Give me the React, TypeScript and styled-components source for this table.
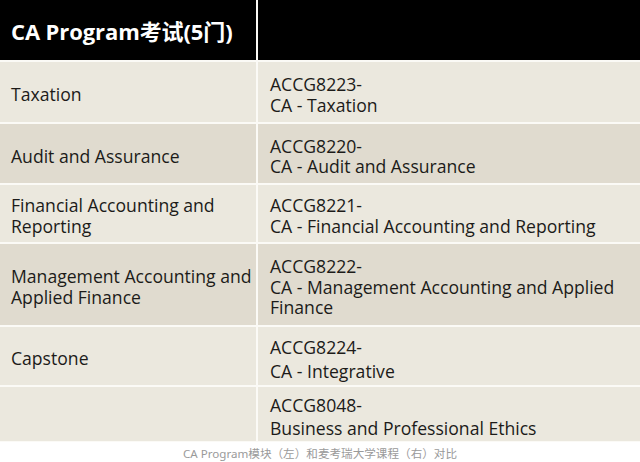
import { Fragment } from "react";
import styled, { createGlobalStyle } from "styled-components";

const GlobalStyle = createGlobalStyle`
  html, body {
    margin: 0;
    padding: 0;
    background: #fff;
  }
  body {
    font-family: "Open Sans", "Noto Sans", "Noto Sans CJK SC", sans-serif;
  }
`;

const Page = styled.div`
  width: 640px;
  height: 462px;
  overflow: hidden;
  display: flex;
  flex-direction: column;
`;

const Table = styled.div`
  height: 442px;
  flex-shrink: 0;
  overflow: hidden;
  display: grid;
  grid-template-columns: 256px 1fr;
  align-content: start;
  column-gap: 2px;
  row-gap: 2px;
  background: #fbfaf6;
`;

const HeadCell = styled.div`
  background: #000;
  color: #fff;
  height: 60px;
  display: flex;
  align-items: center;
  padding: 0 11px;
  font-family: "Open Sans", "Noto Sans CJK SC", sans-serif;
  font-weight: 700;
  font-size: 22px;
  letter-spacing: -0.1px;
`;

const Cell = styled.div<{ $dark?: boolean; $h: number; $lh: number }>`
  background: ${(p) => (p.$dark ? "#e0dbcf" : "#ebe8de")};
  height: ${(p) => p.$h}px;
  box-sizing: border-box;
  display: flex;
  flex-direction: column;
  justify-content: center;
  padding: 5px 0 0 11px;
  color: #1c1b19;
  font-size: 17.6px;
  line-height: ${(p) => p.$lh}px;
  white-space: nowrap;
`;

const CodeCell = styled(Cell)`
  padding-left: 12px;
`;

const Caption = styled.div`
  height: 20px;
  display: flex;
  align-items: center;
  justify-content: center;
  font-family: "Noto Sans", "Noto Sans CJK SC", sans-serif;
  font-size: 11.6px;
  color: #9a9a9a;
  padding-top: 1px;
`;

const rows = [
  { name: ["Taxation"], code: "ACCG8223-", title: ["CA - Taxation"], h: 60, lh: 20.5, dark: false },
  { name: ["Audit and Assurance"], code: "ACCG8220-", title: ["CA - Audit and Assurance"], h: 59, lh: 20.5, dark: true },
  {
    name: ["Financial Accounting and", "Reporting"],
    code: "ACCG8221-",
    title: ["CA - Financial Accounting and Reporting"],
    h: 57,
    lh: 21,
    dark: false,
  },
  {
    name: ["Management Accounting and", "Applied Finance"],
    code: "ACCG8222-",
    title: ["CA - Management Accounting and Applied", "Finance"],
    h: 81,
    lh: 20.5,
    dark: true,
  },
  { name: ["Capstone"], code: "ACCG8224-", title: ["CA - Integrative"], h: 58, lh: 24, dark: false },
  { name: [], code: "ACCG8048-", title: ["Business and Professional Ethics"], h: 54, lh: 22.5, dark: false },
];

export default function App() {
  return (
    <Page>
      <GlobalStyle />
      <Table>
        <HeadCell>CA Program考试(5门)</HeadCell>
        <HeadCell />
        {rows.map((r) => (
          <Fragment key={r.code}>
            <Cell $dark={r.dark} $h={r.h} $lh={21}>
              {r.name.map((l) => (
                <span key={l}>{l}</span>
              ))}
            </Cell>
            <CodeCell $dark={r.dark} $h={r.h} $lh={r.lh}>
              <span>{r.code}</span>
              {r.title.map((l) => (
                <span key={l}>{l}</span>
              ))}
            </CodeCell>
          </Fragment>
        ))}
      </Table>
      <Caption>CA Program模块（左）和麦考瑞大学课程（右）对比</Caption>
    </Page>
  );
}
